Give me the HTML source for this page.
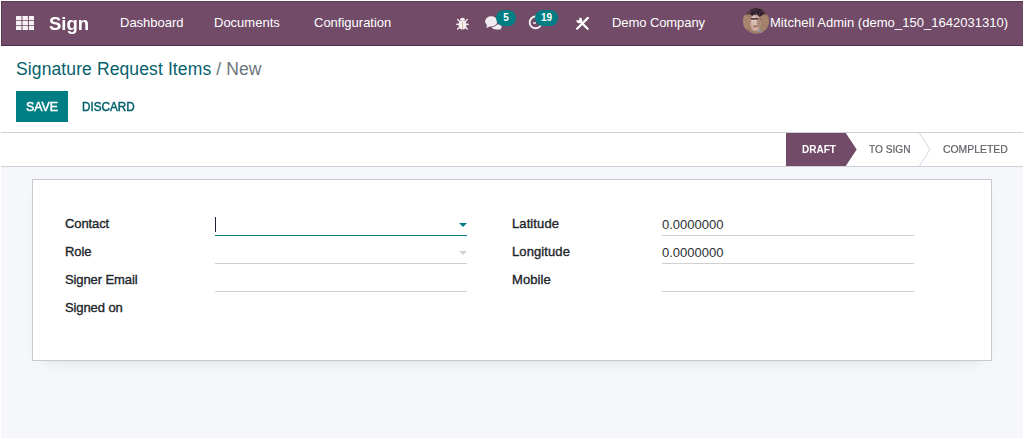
<!DOCTYPE html>
<html><head><meta charset="utf-8">
<style>
*{box-sizing:border-box;margin:0;padding:0}
html,body{width:1024px;height:439px;overflow:hidden;background:#fff;font-family:"Liberation Sans",sans-serif;color:#212529}
#app{position:absolute;left:1px;top:1px;width:1022px;height:437px;background:#f6f7fb;overflow:hidden}
.abs{position:absolute;white-space:nowrap}
.t{position:absolute;white-space:nowrap;line-height:1;transform-origin:0 0}
.nav{position:absolute;left:0;top:0;width:1022px;height:45px;background:#714B67;border-bottom:1px solid #50304a;box-shadow:inset 1px 1px 0 rgba(70,35,62,.45)}
.nav .t{color:#fff}
.cp{position:absolute;left:0;top:45px;width:1022px;height:87px;background:#fff;border-bottom:1px solid #cdd0d6}
.sb{position:absolute;left:0;top:132px;width:1022px;height:34px;background:#fff;border-bottom:1px solid #cdd0d6}
.sheet{position:absolute;left:31px;top:178px;width:960px;height:182px;background:#fff;border:1px solid #c9cacf;box-shadow:0 6px 18px -12px rgba(0,0,0,.22)}
.lbl{font-size:13px;font-weight:normal;color:#212529;-webkit-text-stroke:.35px #212529}
.val{font-size:13px;color:#2b2f33}
.line{position:absolute;height:1px;background:#ced0d4}
.badge{position:absolute;height:16px;border-radius:8px;background:#017e84;color:#fff;font-size:10px;font-weight:bold;text-align:center;line-height:15px}
</style></head><body>
<div id="app">
<div class="nav">
<svg class="abs" style="left:14.6px;top:14.8px" width="18.4" height="14.3" viewBox="0 0 18.4 14.3"><g fill="#f6f1f4"><rect x="0.00" y="0.00" width="5.5" height="4.2" rx=".5"/><rect x="6.45" y="0.00" width="5.5" height="4.2" rx=".5"/><rect x="12.90" y="0.00" width="5.5" height="4.2" rx=".5"/><rect x="0.00" y="5.05" width="5.5" height="4.2" rx=".5"/><rect x="6.45" y="5.05" width="5.5" height="4.2" rx=".5"/><rect x="12.90" y="5.05" width="5.5" height="4.2" rx=".5"/><rect x="0.00" y="10.10" width="5.5" height="4.2" rx=".5"/><rect x="6.45" y="10.10" width="5.5" height="4.2" rx=".5"/><rect x="12.90" y="10.10" width="5.5" height="4.2" rx=".5"/></g></svg>
<span id="t_sign" class="t" style="left:48px;top:12.5px;font-size:19px;font-weight:bold;transform:scaleX(.975)">Sign</span>
<span id="t_dash" class="t" style="left:119px;top:15px;font-size:13px">Dashboard</span>
<span id="t_docs" class="t" style="left:213px;top:15px;font-size:13px">Documents</span>
<span id="t_conf" class="t" style="left:313px;top:15px;font-size:13px">Configuration</span>
<!-- bug -->
<svg class="abs" style="left:454.5px;top:15.5px" width="13" height="13" viewBox="0 0 13 13"><g fill="#f4eef2"><path d="M3.9 3.5 A2.6 2.8 0 0 1 9.1 3.5z"/><ellipse cx="6.5" cy="7.9" rx="4" ry="4.7"/><rect x="0.2" y="6.6" width="12.6" height="1.4"/></g><g stroke="#f4eef2" stroke-width="1.4" stroke-linecap="round"><path d="M1.6 2.4 L3.6 4.6 M11.4 2.4 L9.4 4.6 M1.6 12 L3.6 10.2 M11.4 12 L9.4 10.2"/></g><rect x="6.1" y="4.6" width=".8" height="7.4" fill="#c9a36a" opacity=".8"/></svg>
<!-- comments -->
<svg class="abs" style="left:482.8px;top:13.8px" width="18" height="15" viewBox="0 0 18 15"><g fill="#f1ecf0"><path d="M14.4 12 L17.6 14.6 L11.5 13.9z"/><ellipse cx="12.8" cy="11.8" rx="4.9" ry="2.6"/><ellipse cx="7.3" cy="6.4" rx="6.7" ry="5.7" fill="#714B67"/><ellipse cx="7.2" cy="6.3" rx="6.1" ry="5.1"/><path d="M3 9.5 L2.4 12.9 L7 10.9z"/></g></svg>
<div class="badge" style="left:495px;top:9px;width:20px">5</div>
<!-- clock -->
<svg class="abs" style="left:526.6px;top:13.3px" width="16" height="16" viewBox="0 0 16 16"><circle cx="7.6" cy="8.4" r="5.9" fill="none" stroke="#f4eef2" stroke-width="1.9"/><path d="M8 9 H5" fill="none" stroke="#f4eef2" stroke-width="1.5"/></svg>
<div class="badge" style="left:534px;top:9px;width:23px">19</div>
<!-- tools -->
<svg class="abs" style="left:574.8px;top:15.7px" width="13" height="13" viewBox="0 0 13 13"><g stroke="#fff" fill="none" stroke-linecap="round"><path d="M11.9 0.9 L1.1 11.7" stroke-width="2.2"/><path d="M4.6 4.8 L11.6 11.8" stroke-width="2.2"/></g><circle cx="3.3" cy="3.3" r="2.9" fill="#fff"/><circle cx="1.6" cy="1.5" r="1.9" fill="#714B67"/></svg>
<span id="t_comp" class="t" style="left:611px;top:15px;font-size:13px;letter-spacing:-.08px">Demo Company</span>
<!-- avatar -->
<svg class="abs" style="left:742px;top:6.8px" width="26" height="26" viewBox="0 0 26 26"><defs><clipPath id="c"><circle cx="13" cy="13" r="12.9"/></clipPath><filter id="bl" x="-10%" y="-10%" width="120%" height="120%"><feGaussianBlur stdDeviation="0.6"/></filter><filter id="nz" x="0" y="0" width="100%" height="100%"><feTurbulence type="fractalNoise" baseFrequency="0.9" numOctaves="2" seed="7" result="n"/><feColorMatrix in="n" type="matrix" values="0 0 0 0 0.3  0 0 0 0 0.14  0 0 0 0 0.16  1.1 1.1 1.1 0 -1.55"/></filter></defs><g clip-path="url(#c)"><rect width="26" height="26" fill="#a2826a"/><g filter="url(#bl)"><rect x="-2" y="-3" width="30" height="9.5" fill="#553641"/><rect x="-1" y="8" width="7" height="14" fill="#aa8a6c"/><rect x="19.5" y="8" width="8" height="14" fill="#a6856a"/><ellipse cx="13.8" cy="4.6" rx="7" ry="4.6" fill="#2a1a2c"/><ellipse cx="12.4" cy="14.8" rx="5.3" ry="8.4" fill="#d3b6a4"/><ellipse cx="11.2" cy="12.5" rx="2.6" ry="4.5" fill="#e3cfc2"/><rect x="7.8" y="10" width="9.6" height="1.7" fill="#4a2f38"/><ellipse cx="15.8" cy="15" rx="1.6" ry="5" fill="#b08c7c"/><ellipse cx="12.4" cy="18.4" rx="2.4" ry="0.9" fill="#a06c66"/><path d="M14 23 L20 26 L17 21z" fill="#8fa0b8"/><path d="M-1 27 L5 21 L9 27z" fill="#7a5a50"/></g><rect width="26" height="26" filter="url(#nz)"/></g></svg>
<span id="t_user" class="t" style="left:769px;top:15px;font-size:13px;letter-spacing:.03px">Mitchell Admin (demo_150_1642031310)</span>
</div>

<div class="cp">
<span id="t_bc" class="t" style="left:15px;top:15px;font-size:17.5px;letter-spacing:.115px;color:#06616c">Signature Request Items <span style="color:#6c757d">/ New</span></span>
<div class="abs" style="left:15px;top:45px;width:52px;height:31px;background:#017e84"></div>
<span id="t_save" class="t" style="left:25px;top:54px;font-size:13px;color:#fff;-webkit-text-stroke:.5px #fff;transform:scaleX(.95)">SAVE</span>
<span id="t_disc" class="t" style="left:80.5px;top:54px;font-size:13px;color:#06616c;-webkit-text-stroke:.5px #06616c;transform:scaleX(.90)">DISCARD</span>
</div>

<div class="sb">
<svg class="abs" style="left:785px;top:0" width="237" height="33" viewBox="0 0 238 33"><path d="M0 0 H60 L71 16.5 L60 33 H0z" fill="#714B67"/><path d="M134 0 L144.5 16.5 L134 33" fill="none" stroke="#d3d5da" stroke-width="1"/></svg>
<span id="t_draft" class="t" style="left:800.5px;top:10.5px;font-size:11px;font-weight:bold;color:#fff;transform:scaleX(.909)">DRAFT</span>
<span id="t_tosign" class="t" style="left:868px;top:10.5px;font-size:11px;color:#5f6066;-webkit-text-stroke:.2px #5f6066;transform:scaleX(.922)">TO SIGN</span>
<span id="t_compl" class="t" style="left:941.5px;top:10.5px;font-size:11px;color:#5f6066;-webkit-text-stroke:.2px #5f6066;transform:scaleX(.945)">COMPLETED</span>
</div>

<div class="sheet"></div>
<!-- left column -->
<span id="l_contact" class="t lbl" style="letter-spacing:-.1px;left:64px;top:216px">Contact</span>
<span id="l_role" class="t lbl" style="letter-spacing:-.1px;left:64px;top:244px">Role</span>
<span id="l_email" class="t lbl" style="letter-spacing:-.1px;left:64px;top:272px">Signer Email</span>
<span id="l_signed" class="t lbl" style="letter-spacing:-.1px;left:64px;top:300px">Signed on</span>
<div class="abs" style="left:214px;top:216px;width:1px;height:15px;background:#1b2030"></div>
<div class="line" style="left:214px;top:234px;width:252px;background:#017e84"></div>
<div class="line" style="left:214px;top:262px;width:252px"></div>
<div class="line" style="left:214px;top:290px;width:252px"></div>
<svg class="abs" style="left:458px;top:222px" width="8" height="4" viewBox="0 0 8 4"><path d="M0 0H8L4 4z" fill="#017e84"/></svg>
<svg class="abs" style="left:458px;top:250px" width="8" height="4" viewBox="0 0 8 4"><path d="M0 0H8L4 4z" fill="#cfd1d4"/></svg>
<!-- right column -->
<span id="l_lat" class="t lbl" style="letter-spacing:.1px;left:511px;top:216px">Latitude</span>
<span id="l_lon" class="t lbl" style="letter-spacing:.1px;left:511px;top:244px">Longitude</span>
<span id="l_mob" class="t lbl" style="letter-spacing:.1px;left:511px;top:272px">Mobile</span>
<span id="v_lat" class="t val" style="left:661px;top:217px">0.0000000</span>
<span id="v_lon" class="t val" style="left:661px;top:245px">0.0000000</span>
<div class="line" style="left:661px;top:234px;width:252px"></div>
<div class="line" style="left:661px;top:262px;width:252px"></div>
<div class="line" style="left:661px;top:290px;width:252px"></div>
</div>
</body></html>
